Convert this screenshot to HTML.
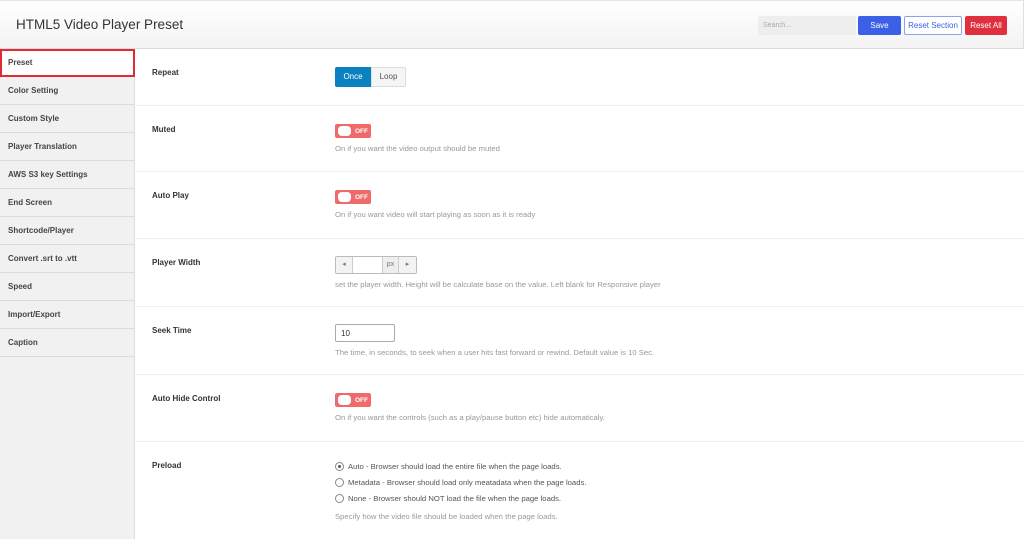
<!DOCTYPE html>
<html><head><meta charset="utf-8"><style>
*{box-sizing:border-box;margin:0;padding:0}
body{width:1024px;height:539px;overflow:hidden;background:#fff;font-family:"Liberation Sans",sans-serif;color:#333;position:relative}
.hdr{position:absolute;left:0;top:0;width:1024px;height:49px;background:linear-gradient(#fff,#f3f3f3);border-bottom:1px solid #dcdcdc;border-top:1px solid #e5e5e5;border-right:1px solid #e0e0e0}
.hdr h1{position:absolute;left:16px;top:16px;font-size:13.5px;font-weight:normal;color:#333}
.search{position:absolute;left:758px;top:15px;width:98px;height:19px;background:#eee;border-radius:2px;font-size:7px;color:#aaa;padding:6px 5px}
.btn{position:absolute;top:15px;height:19px;border-radius:2px;font-size:8px;text-align:center;line-height:19px}
.side{position:absolute;left:0;top:49px;width:135px;height:490px;background:#f1f1f1;border-right:1px solid #ddd}
.side div{height:28px;border-bottom:1px solid #dcdcdc;font-size:8px;font-weight:bold;color:#444;padding-left:8px;line-height:28px}
.side .act{background:#fff;border:2px solid #e02b37;width:135px;height:28px;padding-left:6px;line-height:24px}
.row{position:absolute;left:136px;width:888px;border-bottom:1px solid #eee}
.lbl{position:absolute;left:16px;font-size:8px;font-weight:bold;color:#333}
.ctl{position:absolute;left:199px}
.desc{font-size:7.7px;color:#999;margin-top:6px;white-space:nowrap}
.tog{width:36px;height:14px;background:#ef6b6b;border-radius:2px;position:relative}
.tog:before{content:"";position:absolute;left:3px;top:2px;width:13px;height:10px;background:#fff;border-radius:4px}
.tog span{position:absolute;left:20px;top:4px;font-size:6.5px;color:#fff;font-weight:bold}
.radio{font-size:7.7px;color:#555;height:16px;display:flex;align-items:center}
.radio i{display:inline-block;width:9px;height:9px;border:1px solid #888;border-radius:50%;margin-right:4px;position:relative}
.radio i.on:after{content:"";position:absolute;left:2px;top:2px;width:3px;height:3px;background:#555;border-radius:50%}
</style></head><body>
<div class="hdr"><h1>HTML5 Video Player Preset</h1>
<div class="search">Search...</div>
<div class="btn" style="left:858px;width:43px;background:#3b5fe6;color:#fff">Save</div>
<div class="btn" style="left:904px;width:58px;border:1px solid #8ea0f0;color:#3b5fe6;background:#fff;line-height:17px">Reset Section</div>
<div class="btn" style="left:965px;width:42px;background:#e0303f;color:#fff">Reset All</div>
</div>
<div class="side">
<div class="act">Preset</div><div>Color Setting</div><div>Custom Style</div><div>Player Translation</div><div>AWS S3 key Settings</div><div>End Screen</div><div>Shortcode/Player</div><div>Convert .srt to .vtt</div><div>Speed</div><div>Import/Export</div><div>Caption</div>
</div>
<div class="row" style="top:49px;height:57px"><div class="lbl" style="top:19px">Repeat</div>
<div class="ctl" style="top:18px;display:flex;font-size:8px"><div style="width:36px;height:20px;background:#0a82c0;color:#fff;text-align:center;line-height:20px;border-radius:2px 0 0 2px">Once</div><div style="width:35px;height:20px;background:#f5f5f5;border:1px solid #ddd;color:#555;text-align:center;line-height:18px;border-radius:0 2px 2px 0">Loop</div></div></div>
<div class="row" style="top:106px;height:66px"><div class="lbl" style="top:19px">Muted</div>
<div class="ctl" style="top:18px"><div class="tog"><span>OFF</span></div><div class="desc">On if you want the video output should be muted</div></div></div>
<div class="row" style="top:172px;height:67px"><div class="lbl" style="top:19px">Auto Play</div>
<div class="ctl" style="top:18px"><div class="tog"><span>OFF</span></div><div class="desc">On if you want video will start playing as soon as it is ready</div></div></div>
<div class="row" style="top:239px;height:68px"><div class="lbl" style="top:19px">Player Width</div>
<div class="ctl" style="top:17px"><div style="display:flex;width:82px;height:18px;border:1px solid #bbb;border-radius:2px;font-size:7px;color:#777"><div style="width:17px;background:#f3f3f3;text-align:center;line-height:16px;border-right:1px solid #ccc">◂</div><div style="width:29px"></div><div style="width:17px;background:#eee;text-align:center;line-height:16px;border-left:1px solid #ccc;border-right:1px solid #ccc">px</div><div style="width:17px;background:#f3f3f3;text-align:center;line-height:16px">▸</div></div><div class="desc">set the player width. Height will be calculate base on the value. Left blank for Responsive player</div></div></div>
<div class="row" style="top:307px;height:68px"><div class="lbl" style="top:19px">Seek Time</div>
<div class="ctl" style="top:17px"><div style="width:60px;height:18px;border:1px solid #aaa;border-radius:2px;font-size:8px;padding:4px 5px">10</div><div class="desc">The time, in seconds, to seek when a user hits fast forward or rewind. Default value is 10 Sec.</div></div></div>
<div class="row" style="top:375px;height:67px"><div class="lbl" style="top:19px">Auto Hide Control</div>
<div class="ctl" style="top:18px"><div class="tog"><span>OFF</span></div><div class="desc">On if you want the controls (such as a play/pause button etc) hide automaticaly.</div></div></div>
<div class="row" style="top:442px;height:97px;border:none"><div class="lbl" style="top:19px">Preload</div>
<div class="ctl" style="top:16px"><div class="radio"><i class="on"></i>Auto - Browser should load the entire file when the page loads.</div><div class="radio"><i></i>Metadata - Browser should load only meatadata when the page loads.</div><div class="radio"><i></i>None - Browser should NOT load the file when the page loads.</div><div class="desc" style="margin-top:6px">Specify how the video file should be loaded when the page loads.</div></div></div>
</body></html>
